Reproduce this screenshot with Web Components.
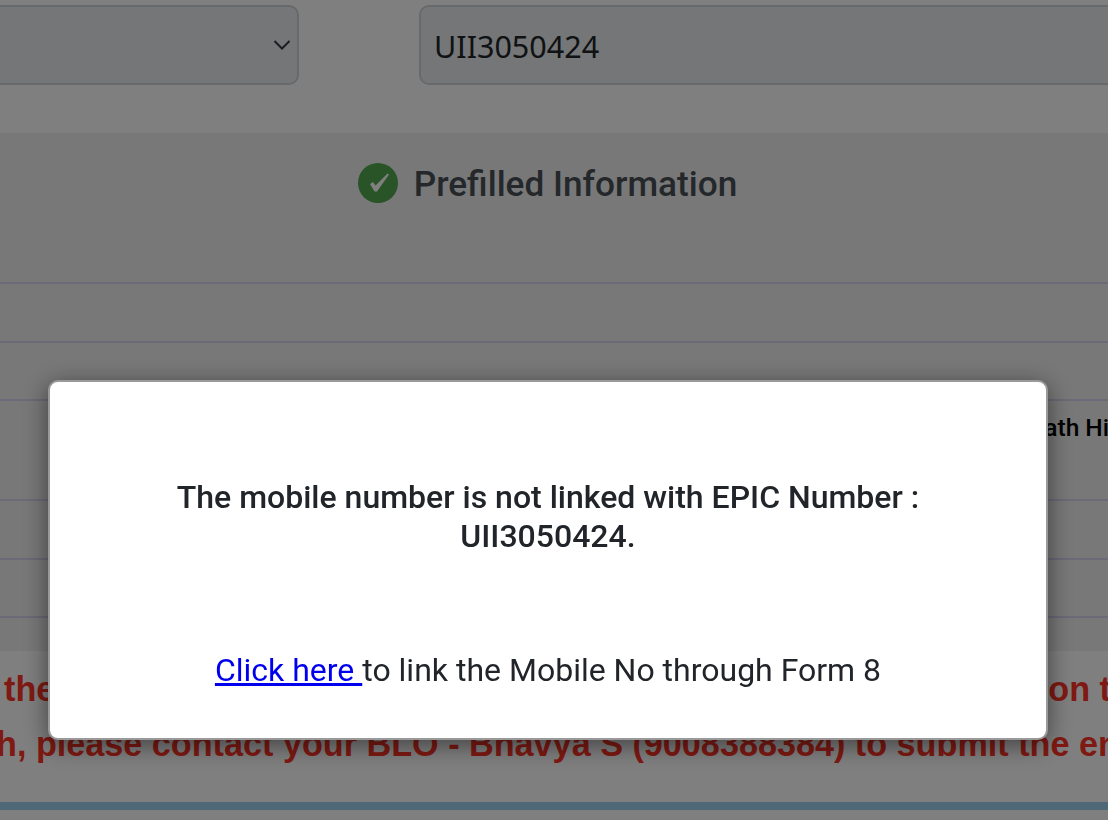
<!DOCTYPE html>
<html lang="en">
<head>
<meta charset="utf-8">
<title>Prefilled Information</title>
<style>
  html, body { margin: 0; height: 820px; overflow: hidden; background: #fff; font-family: Roboto, sans-serif; }
</style>
</head>
<body>
<epic-search value="UII3050424"></epic-search>
<prefilled-info>
  <info-row></info-row>
  <info-row></info-row>
  <info-row tall value="ath Hi"></info-row>
  <info-row></info-row>
  <info-row></info-row>
  <info-row short></info-row>
</prefilled-info>
<blo-notice></blo-notice>
<alert-modal>
  <span slot="title">The mobile number is not linked with EPIC Number : UII3050424.</span>
  <a slot="action" href="#">Click here </a><span slot="action">to link the Mobile No through Form 8</span>
</alert-modal>

<script>
class EpicSearch extends HTMLElement {
  connectedCallback() {
    this.attachShadow({ mode: 'open' });
    this.shadowRoot.innerHTML = `
      <style>
        :host {
          display: grid;
          grid-template-columns: 399px 789px;
          gap: 120px;
          height: 133px;
          box-sizing: border-box;
          padding-top: 5px;
          margin-left: -100px;
          width: 1308px;
        }
        .field {
          box-sizing: border-box;
          height: 80px;
          border: 2px solid #ced4da;
          border-radius: 10px;
          background: #e9ecef;
          display: flex;
          align-items: center;
          padding: 2px 13px 0;
          font: 400 30.5px "Noto Sans", sans-serif;
          color: #212529;
        }
        .select { justify-content: flex-end; padding: 0 6px 0 0; }
      </style>
      <div class="field select">
        <svg width="18" height="12" viewBox="0 0 18 12" fill="none" stroke="#343a40" stroke-width="2"><path d="M1.5 2 L9 9.5 L16.5 2"/></svg>
      </div>
      <div class="field">${this.getAttribute('value')}</div>
    `;
  }
}

class PrefilledInfo extends HTMLElement {
  connectedCallback() {
    this.attachShadow({ mode: 'open' });
    this.shadowRoot.innerHTML = `
      <style>
        :host { display: block; background: #f1f1f1; height: 518px; }
        h2 {
          margin: 0;
          height: 149px;
          box-sizing: border-box;
          padding: 30px 13px 0 0;
          display: flex;
          justify-content: center;
          align-items: flex-start;
          gap: 16px;
          font: 500 35.2px/41px Roboto, sans-serif;
          color: #495057;
        }
        h2 span { margin-top: 1px; }
        svg { display: block; }
      </style>
      <h2>
        <svg width="40" height="40" viewBox="0 0 40 40">
          <circle cx="20" cy="20" r="20" fill="#50a850"/>
          <path d="M12 21 L15 19 L17.5 22.5 L29.5 10.5 L31 11.5 L19 28.5 L16.5 28.5 Z" fill="#fff"/>
        </svg>
        <span>Prefilled Information</span>
      </h2>
      <slot></slot>
    `;
  }
}

class InfoRow extends HTMLElement {
  connectedCallback() {
    this.attachShadow({ mode: 'open' });
    const value = this.getAttribute('value') || '';
    this.shadowRoot.innerHTML = `
      <style>
        :host {
          display: flex;
          box-sizing: border-box;
          height: 58.5px;
          border-top: 2px solid #d5d5f0;
          justify-content: flex-end;
          font: 500 24.5px/54px Roboto, sans-serif;
          color: #000;
          white-space: nowrap;
        }
        :host([tall]) { height: 100px; }
        :host([short]) { height: 34px; }
        span { margin-right: -1px; }
      </style>
      <span>${value}</span>
    `;
  }
}

class BloNotice extends HTMLElement {
  connectedCallback() {
    this.attachShadow({ mode: 'open' });
    this.shadowRoot.innerHTML = `
      <style>
        :host {
          display: block;
          height: 169px;
          box-sizing: border-box;
          padding-top: 11px;
          font: 700 34.2px/55px "Liberation Sans", Arial, sans-serif;
          color: #ff3326;
          white-space: nowrap;
          overflow: hidden;
        }
        .first { display: flex; justify-content: space-between; padding-left: 4px; }
        .first span:last-child { margin-right: -3px; }
        .second { margin-left: -4px; }
        .bar { height: 8px; background: #9fd0f0; margin-top: 30px; }
      </style>
      <div class="first"><span>the</span><span>on t</span></div>
      <div class="second">h, please contact your BLO - Bhavya S (9008388384) to submit the en</div>
      <div class="bar"></div>
    `;
  }
}

class AlertModal extends HTMLElement {
  connectedCallback() {
    this.attachShadow({ mode: 'open' });
    this.shadowRoot.innerHTML = `
      <style>
        :host {
          position: fixed;
          inset: 0;
          background: rgba(0,0,0,.5);
          display: block;
          padding: 380px 60px 0 48px;
          font-family: Roboto, sans-serif;
        }
        .box {
          box-sizing: border-box;
          width: 1000px;
          height: 360px;
          background: #fff;
          border: 2px solid #999;
          border-radius: 10px;
          box-shadow: 0 5px 25px rgba(0,0,0,.5);
          padding: 96px 100px 0;
          text-align: center;
          color: #212529;
        }
        .title { font: 500 32px/39px Roboto, sans-serif; }
        .action { margin-top: 94px; font: 400 32px/40px Roboto, sans-serif; }
        ::slotted(a) { color: #0000ee; }
      </style>
      <div class="box">
        <div class="title"><slot name="title"></slot></div>
        <div class="action"><slot name="action"></slot></div>
      </div>
    `;
  }
}

customElements.define('epic-search', EpicSearch);
customElements.define('prefilled-info', PrefilledInfo);
customElements.define('info-row', InfoRow);
customElements.define('blo-notice', BloNotice);
customElements.define('alert-modal', AlertModal);
</script>
</body>
</html>
